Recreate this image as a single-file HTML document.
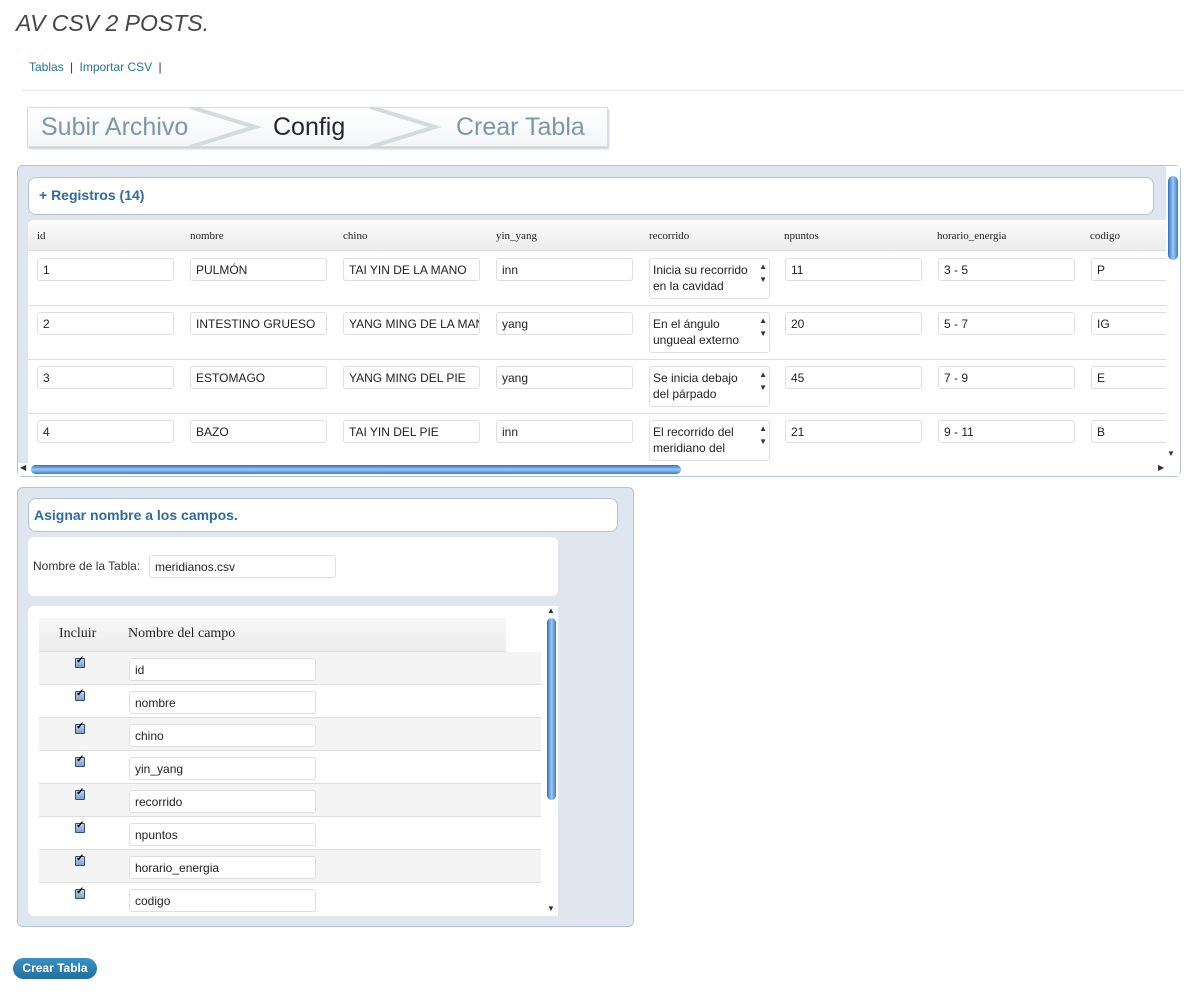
<!DOCTYPE html>
<html><head><meta charset="utf-8"><style>
*{box-sizing:border-box;margin:0;padding:0}
body{width:1184px;height:993px;background:#fff;font-family:"Liberation Sans",sans-serif;position:relative;overflow:hidden;color:#333}
.a{position:absolute}
.inp{position:absolute;background:#fff;border:1px solid #dfdfdf;border-radius:3px;font-size:12px;padding:4px 0 0 5px;height:23px;color:#222;white-space:nowrap;overflow:hidden}
.ta{position:absolute;background:#fff;border:1px solid #dfdfdf;border-radius:3px;font-size:12px;line-height:16px;padding:3px 16px 0 3px;height:41px;width:121px;color:#222;overflow:hidden}
.ta:after{content:"▲\A▼";white-space:pre;position:absolute;right:2px;top:1px;font-size:8px;line-height:13px;color:#333}
.th{position:absolute;font-family:"Liberation Serif",serif;font-size:11px;color:#222}
.cb{position:absolute;width:10px;height:10px;border:1px solid #3a5068;background:linear-gradient(#bcd4ee,#7aa3cf);border-radius:1px}
.cb:after{content:"✓";position:absolute;left:0;top:-4px;font-size:10px;color:#000;font-weight:bold}
</style></head><body>
<div class="a" style="left:16px;top:10px;font-size:23px;font-style:italic;color:#464646">AV CSV 2 POSTS.</div>
<div class="a" style="left:29px;top:60px;font-size:12px;color:#21759b">Tablas <span style="color:#333;margin:0 3px">|</span> Importar CSV <span style="color:#333;margin:0 3px">|</span></div>
<div class="a" style="left:22px;top:90px;width:1162px;height:1px;background:#e3e3e3"></div>

<div class="a" style="left:27px;top:107px;width:581px;height:40px;border:1px solid #d8dde0;background:linear-gradient(#fff,#f3f5f6);box-shadow:1px 2px 2px #ccd"></div>
<svg class="a" style="left:170px;top:107px" width="280" height="40"><path d="M20 0 L85 20 L20 40" fill="none" stroke="#d5dadc" stroke-width="4"/><path d="M200 0 L265 20 L200 40" fill="none" stroke="#d5dadc" stroke-width="4"/></svg>
<div class="a" style="left:41px;top:113px;font-size:25px;color:#7b98aa">Subir Archivo</div>
<div class="a" style="left:273px;top:113px;font-size:25px;color:#262638">Config</div>
<div class="a" style="left:456px;top:113px;font-size:25px;color:#7b98aa">Crear Tabla</div>

<div class="a" style="left:17px;top:165px;width:1164px;height:312px;background:#dfe6f0;border:1px solid #b3c2d9;border-radius:6px"></div>
<div class="a" style="left:28px;top:177px;width:1126px;height:38px;background:#fff;border:1px solid #b5c3da;border-radius:8px"></div>
<div class="a" style="left:39px;top:187px;font-size:14px;font-weight:bold;color:#2e6b9e">+ Registros (14)</div>
<div class="a" style="left:28px;top:220px;width:1138px;height:243px;background:#fff;border-radius:6px 0 0 0"></div>
<div class="a" style="left:28px;top:222px;width:1138px;height:29px;background:linear-gradient(#fafafa,#ececec);border-bottom:1px solid #ddd"></div>
<div class="th" style="left:37px;top:230px">id</div>
<div class="th" style="left:190px;top:230px">nombre</div>
<div class="th" style="left:343px;top:230px">chino</div>
<div class="th" style="left:496px;top:230px">yin_yang</div>
<div class="th" style="left:649px;top:230px">recorrido</div>
<div class="th" style="left:784px;top:230px">npuntos</div>
<div class="th" style="left:937px;top:230px">horario_energia</div>
<div class="th" style="left:1090px;top:230px">codigo</div>

<div class="a" style="left:28px;top:305px;width:1138px;height:1px;background:#ddd"></div>
<div class="a" style="left:28px;top:359px;width:1138px;height:1px;background:#ddd"></div>
<div class="a" style="left:28px;top:413px;width:1138px;height:1px;background:#ddd"></div>

<div class="inp" style="left:37px;top:258px;width:137px">1</div>
<div class="inp" style="left:190px;top:258px;width:137px">PULMÓN</div>
<div class="inp" style="left:343px;top:258px;width:137px">TAI YIN  DE LA MANO</div>
<div class="inp" style="left:496px;top:258px;width:137px">inn</div>
<div class="ta" style="left:649px;top:258px">Inicia su recorrido en la cavidad</div>
<div class="inp" style="left:785px;top:258px;width:137px">11</div>
<div class="inp" style="left:938px;top:258px;width:137px">3 - 5</div>
<div class="inp" style="left:1091px;top:258px;width:80px">P</div>

<div class="inp" style="left:37px;top:312px;width:137px">2</div>
<div class="inp" style="left:190px;top:312px;width:137px">INTESTINO GRUESO</div>
<div class="inp" style="left:343px;top:312px;width:137px">YANG MING DE LA MANO</div>
<div class="inp" style="left:496px;top:312px;width:137px">yang</div>
<div class="ta" style="left:649px;top:312px">En el ángulo ungueal externo</div>
<div class="inp" style="left:785px;top:312px;width:137px">20</div>
<div class="inp" style="left:938px;top:312px;width:137px">5 - 7</div>
<div class="inp" style="left:1091px;top:312px;width:80px">IG</div>

<div class="inp" style="left:37px;top:366px;width:137px">3</div>
<div class="inp" style="left:190px;top:366px;width:137px">ESTOMAGO</div>
<div class="inp" style="left:343px;top:366px;width:137px">YANG MING DEL PIE</div>
<div class="inp" style="left:496px;top:366px;width:137px">yang</div>
<div class="ta" style="left:649px;top:366px">Se inicia debajo del párpado</div>
<div class="inp" style="left:785px;top:366px;width:137px">45</div>
<div class="inp" style="left:938px;top:366px;width:137px">7 - 9</div>
<div class="inp" style="left:1091px;top:366px;width:80px">E</div>

<div class="inp" style="left:37px;top:420px;width:137px">4</div>
<div class="inp" style="left:190px;top:420px;width:137px">BAZO</div>
<div class="inp" style="left:343px;top:420px;width:137px">TAI YIN DEL PIE</div>
<div class="inp" style="left:496px;top:420px;width:137px">inn</div>
<div class="ta" style="left:649px;top:420px">El recorrido del meridiano del</div>
<div class="inp" style="left:785px;top:420px;width:137px">21</div>
<div class="inp" style="left:938px;top:420px;width:137px">9 - 11</div>
<div class="inp" style="left:1091px;top:420px;width:80px">B</div>

<div class="a" style="left:1166px;top:166px;width:14px;height:298px;background:#fff"></div>
<div class="a" style="left:1168px;top:176px;width:10px;height:84px;background:linear-gradient(90deg,#2f6fc0,#9cc8f4,#3a7dd0);border-radius:5px"></div>
<div class="a" style="left:1167px;top:449px;font-size:8px">▼</div>
<div class="a" style="left:18px;top:463px;width:1162px;height:13px;background:#fff"></div>
<div class="a" style="left:31px;top:465px;width:650px;height:9px;background:linear-gradient(#2f6fc0,#9cc8f4,#3a7dd0);border-radius:5px"></div>
<div class="a" style="left:20px;top:463px;font-size:8px">◀</div>
<div class="a" style="left:1158px;top:463px;font-size:8px">▶</div>

<div class="a" style="left:17px;top:487px;width:617px;height:440px;background:#dfe6f0;border:1px solid #b3c2d9;border-radius:6px"></div>
<div class="a" style="left:28px;top:498px;width:590px;height:34px;background:#fff;border:1px solid #b5c3da;border-radius:8px"></div>
<div class="a" style="left:34px;top:507px;font-size:14px;font-weight:bold;color:#2e6b9e">Asignar nombre a los campos.</div>
<div class="a" style="left:28px;top:537px;width:530px;height:59px;background:#fff;border-radius:6px"></div>
<div class="a" style="left:33px;top:559px;font-size:12px">Nombre de la Tabla:</div>
<div class="inp" style="left:149px;top:555px;width:187px">meridianos.csv</div>

<div class="a" style="left:28px;top:606px;width:530px;height:310px;background:#fff;border-radius:6px 0 0 6px"></div>
<div class="a" style="left:39px;top:618px;width:467px;height:34px;background:linear-gradient(#f8f8f8,#ececec);border-bottom:1px solid #ddd"></div>
<div class="a" style="left:59px;top:626px;font-family:'Liberation Serif',serif;font-size:14px;color:#222">Incluir</div>
<div class="a" style="left:128px;top:626px;font-family:'Liberation Serif',serif;font-size:14px;color:#222">Nombre del campo</div>

<div class="a" style="left:39px;top:652px;width:502px;height:33px;background:#f4f4f4;border-bottom:1px solid #ddd"></div>
<div class="a" style="left:39px;top:685px;width:502px;height:33px;background:#fff;border-bottom:1px solid #ddd"></div>
<div class="a" style="left:39px;top:718px;width:502px;height:33px;background:#f4f4f4;border-bottom:1px solid #ddd"></div>
<div class="a" style="left:39px;top:751px;width:502px;height:33px;background:#fff;border-bottom:1px solid #ddd"></div>
<div class="a" style="left:39px;top:784px;width:502px;height:33px;background:#f4f4f4;border-bottom:1px solid #ddd"></div>
<div class="a" style="left:39px;top:817px;width:502px;height:33px;background:#fff;border-bottom:1px solid #ddd"></div>
<div class="a" style="left:39px;top:850px;width:502px;height:33px;background:#f4f4f4;border-bottom:1px solid #ddd"></div>
<div class="a" style="left:39px;top:883px;width:502px;height:33px;background:#fff"></div>

<div class="cb" style="left:75px;top:658px"></div><div class="inp" style="left:129px;top:658px;width:187px">id</div>
<div class="cb" style="left:75px;top:691px"></div><div class="inp" style="left:129px;top:691px;width:187px">nombre</div>
<div class="cb" style="left:75px;top:724px"></div><div class="inp" style="left:129px;top:724px;width:187px">chino</div>
<div class="cb" style="left:75px;top:757px"></div><div class="inp" style="left:129px;top:757px;width:187px">yin_yang</div>
<div class="cb" style="left:75px;top:790px"></div><div class="inp" style="left:129px;top:790px;width:187px">recorrido</div>
<div class="cb" style="left:75px;top:823px"></div><div class="inp" style="left:129px;top:823px;width:187px">npuntos</div>
<div class="cb" style="left:75px;top:856px"></div><div class="inp" style="left:129px;top:856px;width:187px">horario_energia</div>
<div class="cb" style="left:75px;top:889px"></div><div class="inp" style="left:129px;top:889px;width:187px">codigo</div>

<div class="a" style="left:545px;top:606px;width:13px;height:310px;background:#fff"></div>
<div class="a" style="left:547px;top:618px;width:9px;height:182px;background:linear-gradient(90deg,#2f6fc0,#9cc8f4,#3a7dd0);border-radius:5px"></div>
<div class="a" style="left:547px;top:606px;font-size:8px">▲</div>
<div class="a" style="left:547px;top:904px;font-size:8px">▼</div>

<div class="a" style="left:13px;top:958px;width:84px;height:21px;background:linear-gradient(#3a90c2,#21709f);border-radius:11px;color:#fff;font-size:12px;font-weight:bold;text-align:center;line-height:21px">Crear Tabla</div>
</body></html>
